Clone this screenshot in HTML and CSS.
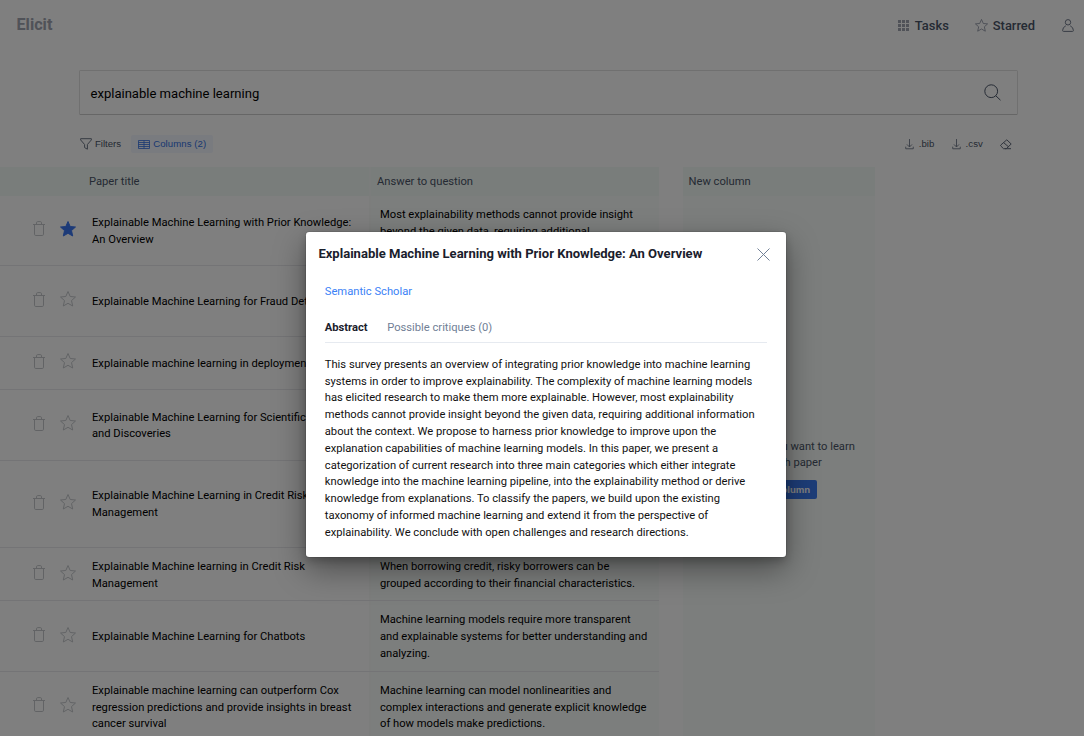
FILE: index.html
```
<!DOCTYPE html>
<html lang="en">
<head>
<meta charset="utf-8">
<title>Elicit</title>
<link rel="stylesheet" href="styles.css">
</head>
<body>
<svg width="0" height="0" class="defs">
  <symbol id="star" viewBox="0 0 16 16"><path d="M8 .5l2.200 5 5.300.5-4 3.600 1.200 5.400L8 12.300 3.300 15l1.200-5.400L.5 6l5.300-.5z"/></symbol>
  <symbol id="trash" viewBox="0 0 12 15"><path d="M0 3.500h12M1.500 3.500v9.700q0 1.300 1.300 1.300h6.400q1.300 0 1.300-1.300V3.500M3.500 3.500V1.800q0-1.200 1.200-1.200h2.600q1.200 0 1.200 1.200v1.700"/></symbol>
  <symbol id="download" viewBox="0 0 10 12"><path d="M5 .5v8.700M2.200 6.500 5 9.300l2.800-2.800M.8 9v2.300h8.400V9"/></symbol>
</svg>
<div class="page">
  <header class="topbar">
    <div class="logo">Elicit</div>
    <nav class="nav">
      <a class="nav-item tasks"><svg class="grid-icon" viewBox="0 0 11 11"><path d="M0 0h3v3H0zM4 0h3v3H4zM8 0h3v3H8zM0 4h3v3H0zM4 4h3v3H4zM8 4h3v3H8zM0 8h3v3H0zM4 8h3v3H4zM8 8h3v3H8z"/></svg>Tasks</a>
      <a class="nav-item starred"><svg class="line nav-star"><use href="#star"/></svg>Starred</a>
      <a class="nav-item"><svg class="line user" viewBox="0 0 12 13"><circle cx="6" cy="3.300" r="2.700"/><path d="M3.800 6.800Q.6 8.300.6 11.500q0 .9.9.9h9q.9 0 .9-.9 0-3.200-3.200-4.700"/></svg></a>
    </nav>
  </header>

  <div class="search">
    <span>explainable machine learning</span>
    <svg class="line search-icon" viewBox="0 0 17 17"><circle cx="7.200" cy="7.200" r="6.400"/><path d="M11.700 11.700l4.800 4.500"/></svg>
  </div>

  <div class="toolbar">
    <div class="tool"><svg class="line funnel" viewBox="0 0 12 12"><path d="M.6.7h10.800v1.200L7.400 6.500v4.700L4.600 9.600V6.500L.6 1.900z"/></svg>Filters</div>
    <div class="tool columns"><svg class="line table-icon" viewBox="0 0 12 9"><path d="M.5.5h11v8h-11zM.5 2.500h11M.5 4.500h11M.5 6.500h11M6 .5v8"/></svg>Columns (2)</div>
    <div class="tool export bib"><svg class="line dl"><use href="#download"/></svg>.bib</div>
    <div class="tool export"><svg class="line dl"><use href="#download"/></svg>.csv</div>
    <div class="tool"><svg class="line eraser" viewBox="0 0 12 11"><path d="M6.800.8 11.200 5 6.300 9.700H3.500L.8 7q-.5-.5 0-1zM3.600 3.600 8.500 7.800M5 9.700h6"/></svg></div>
  </div>

  <div class="results">
    <div class="table">
      <div class="row head"><div class="tools"></div><div class="title">Paper title</div><div class="answer">Answer to question</div></div>
      <div class="row l3"><div class="tools"><svg class="line trash"><use href="#trash"/></svg><svg class="line star on"><use href="#star"/></svg></div><div class="title">Explainable Machine Learning with Prior Knowledge:<br>An Overview</div><div class="answer">Most explainability methods cannot provide insight<br>beyond the given data, requiring additional<br>information about the context.</div></div>
      <div class="row l3"><div class="tools"><svg class="line trash"><use href="#trash"/></svg><svg class="line star"><use href="#star"/></svg></div><div class="title">Explainable Machine Learning for Fraud Detection</div><div class="answer"></div></div>
      <div class="row l2"><div class="tools"><svg class="line trash"><use href="#trash"/></svg><svg class="line star"><use href="#star"/></svg></div><div class="title">Explainable machine learning in deployment</div><div class="answer"></div></div>
      <div class="row l3"><div class="tools"><svg class="line trash"><use href="#trash"/></svg><svg class="line star"><use href="#star"/></svg></div><div class="title">Explainable Machine Learning for Scientific Insights<br>and Discoveries</div><div class="answer"></div></div>
      <div class="row l4"><div class="tools"><svg class="line trash"><use href="#trash"/></svg><svg class="line star"><use href="#star"/></svg></div><div class="title">Explainable Machine Learning in Credit Risk<br>Management</div><div class="answer"></div></div>
      <div class="row l2"><div class="tools"><svg class="line trash"><use href="#trash"/></svg><svg class="line star"><use href="#star"/></svg></div><div class="title">Explainable Machine learning in Credit Risk<br>Management</div><div class="answer">When borrowing credit, risky borrowers can be<br>grouped according to their financial characteristics.</div></div>
      <div class="row l3"><div class="tools"><svg class="line trash"><use href="#trash"/></svg><svg class="line star"><use href="#star"/></svg></div><div class="title">Explainable Machine Learning for Chatbots</div><div class="answer">Machine learning models require more transparent<br>and explainable systems for better understanding and<br>analyzing.</div></div>
      <div class="row l3"><div class="tools"><svg class="line trash"><use href="#trash"/></svg><svg class="line star"><use href="#star"/></svg></div><div class="title">Explainable machine learning can outperform Cox<br>regression predictions and provide insights in breast<br>cancer survival</div><div class="answer">Machine learning can model nonlinearities and<br>complex interactions and generate explicit knowledge<br>of how models make predictions.</div></div>
    </div>
    <aside class="new-column">
      <div class="new-head">New column</div>
      <div class="new-body">
        <p>Choose what you want to learn<br>about each paper</p>
        <button class="add">Add a column</button>
      </div>
    </aside>
  </div>
</div>

<div class="overlay">
  <section class="modal">
    <div class="modal-head"><h2>Explainable Machine Learning with Prior Knowledge: An Overview</h2><svg class="line close" viewBox="0 0 13 13"><path d="M.5.5l12 12M12.500.5l-12 12"/></svg></div>
    <a class="source">Semantic Scholar</a>
    <div class="tabs"><span class="active">Abstract</span><span>Possible critiques (0)</span></div>
    <p class="abstract">This survey presents an overview of integrating prior knowledge into machine learning<br>systems in order to improve explainability. The complexity of machine learning models<br>has elicited research to make them more explainable. However, most explainability<br>methods cannot provide insight beyond the given data, requiring additional information<br>about the context. We propose to harness prior knowledge to improve upon the<br>explanation capabilities of machine learning models. In this paper, we present a<br>categorization of current research into three main categories which either integrate<br>knowledge into the machine learning pipeline, into the explainability method or derive<br>knowledge from explanations. To classify the papers, we build upon the existing<br>taxonomy of informed machine learning and extend it from the perspective of<br>explainability. We conclude with open challenges and research directions.</p>
  </section>
</div>
</body>
</html>
```

FILE: styles.css
```
* { box-sizing: border-box; }
html, body { margin: 0; height: 100%; overflow: hidden; }
body { font-family: Roboto, "Liberation Sans", sans-serif; font-size: 11.2px; line-height: 16.8px; color: #000; background: #fff; }
h2, p { margin: 0; }
svg { flex: none; display: block; }
.defs { position: absolute; }
.line { fill: none; stroke: currentColor; stroke-width: 1; }

.page { height: 736px; overflow: hidden; }
.topbar { height: 70px; padding: 0 10px 18px 16.5px; display: flex; align-items: center; justify-content: space-between; }
.logo { font-size: 16.2px; font-weight: 700; color: #a0a4b0; padding-bottom: 1px; }
.nav { display: flex; align-items: center; color: #4a5568; font-size: 12.9px; font-weight: 500; }
.nav-item { display: flex; align-items: center; }
.tasks { gap: 6px; margin-right: 26px; }
.starred { gap: 5px; margin-right: 27px; }
.grid-icon { width: 11px; height: 11px; fill: #a0a4b0; }
.nav-star { width: 13px; height: 13px; color: #8a90a0; }
.user { width: 12px; height: 13px; color: #70798a; }

.search { margin: 0 66px 0 79px; height: 45px; border: 1px solid #e0e0e0; border-bottom-color: #ccc; border-radius: 1.6px; padding: 3px 16px 0 10.5px; display: flex; align-items: center; justify-content: space-between; font-size: 13.05px; }
.search-icon { width: 17px; height: 17px; color: #4a5568; margin-bottom: 3px; }

.toolbar { margin: 18px 72px 0 80px; height: 22px; display: flex; align-items: center; font-family: "Liberation Sans", Arial, sans-serif; font-size: 9.6px; color: #4a5568; }
.tool { display: flex; align-items: center; }
.funnel { width: 12px; height: 12px; margin-right: 3px; color: #6b7484; }
.columns { margin-left: 10px; height: 18px; padding: 0 7px; background: #f2f6fe; color: #3472e4; border-radius: 2px; letter-spacing: .08px; }
.table-icon { width: 12px; height: 9px; margin-right: 3px; stroke-width: .8; }
.bib { margin-left: auto; }
.export { margin-right: 17px; letter-spacing: .1px; }
.dl { width: 9px; height: 12px; margin-right: 5px; color: #70798a; }
.eraser { width: 12px; height: 11px; color: #5f697a; }

.results { display: flex; margin-top: 11.6px; }
.table { width: 658.5px; flex: none; }
.row { display: flex; border-bottom: 1px solid #e8e8ec; }
.l2 { height: 53.6px; }
.l3 { height: 70.4px; }
.l4 { height: 87.2px; }
.tools { width: 83px; padding: 0 7px 3px 33px; display: flex; align-items: center; justify-content: space-between; color: #c4c7cb; }
.trash { width: 12px; height: 15px; }
.star { width: 16px; height: 16px; }
.on { fill: #3b76f0; color: #3b76f0; }
.title { width: 288px; padding: 3px 0 0 9px; border-right: 2px solid #f8faf9; display: flex; align-items: center; white-space: nowrap; }
.answer { flex: 1; padding: 3px 0 0 9px; background: #f9fdfa; display: flex; align-items: center; white-space: nowrap; }
.head { height: 29.2px; border: 0; background: #f3faf6; color: #4a5568; }
.head .title { padding: 2px 0 0 6px; border-color: #f7fbf9; }
.head .answer { padding: 2px 0 0 6px; background: none; }

.new-column { width: 192px; margin-left: 24px; height: 570px; background: #f9fdfa; color: #4a5568; }
.new-head { height: 29px; padding: 2px 0 0 6px; display: flex; align-items: center; background: #f3faf6; }
.new-body { padding-top: 243px; display: flex; flex-direction: column; align-items: center; text-align: center; white-space: nowrap; }
.add { margin-top: 8px; height: 19px; padding: 0 7px; border: 0; border-radius: 2px; background: #3b7af0; color: #fff; font: 700 9.6px "Liberation Sans", Arial, sans-serif; }

.overlay { position: absolute; inset: 0; background: rgba(0, 0, 0, .5); }
.modal { width: 480px; height: 324.5px; margin: 232px 0 0 305.6px; border-radius: 3.2px; background: #fff; box-shadow: 0 0 0 .8px rgba(0,0,0,.1), 0 4px 8px rgba(0,0,0,.2), 0 12px 32px rgba(0,0,0,.4); padding: 12px 16px 0 12.8px; }
.modal-head { display: flex; justify-content: space-between; align-items: center; height: 20px; }
.modal h2 { font-size: 13.05px; font-weight: 700; color: #1a202c; white-space: nowrap; }
.close { width: 13px; height: 13px; color: #718096; }
.source { display: block; margin: 20px 0 0 6.4px; color: #3b82f6; }
.tabs { margin: 19px 3px 0 6.4px; height: 23px; border-bottom: 1px solid #e6eaf0; display: flex; gap: 19.5px; color: #718096; }
.active { color: #1a202c; font-weight: 700; }
.abstract { margin: 14px 0 0 6.4px; white-space: nowrap; color: #111; }
```
